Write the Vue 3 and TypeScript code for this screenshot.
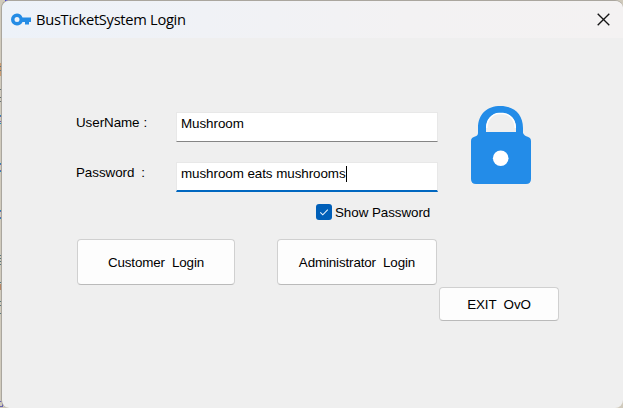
<script setup lang="ts">
import { ref } from 'vue'

const userName = ref('Mushroom')
const password = ref('mushroom eats mushrooms')
const showPassword = ref(true)
</script>

<template>
  <div class="desktop">
    <svg class="backdrop" width="623" height="408" shape-rendering="crispEdges">
      <rect width="623" height="408" fill="#d0cabc" />
      <rect x="5" width="3" height="1" fill="#282be8" />
      <rect x="15" width="12" height="1" fill="#9b9990" />
      <rect y="63" width="2" height="13" fill="#c99b70" />
      <path d="M0 66.5h2M0 70.5h2M0 89.5h2M0 97.5h2M0 101.5h2" stroke="#667377" />
      <path d="M0 116.5h1.5v5H0M0 164.5h1.5v6H0M0 211.5h1.5v6H0" fill="none" stroke="#6862af" />
      <path d="M0 115.5h1M0 123.5h1M0 163.5h1M0 171.5h1M0 210.5h1M0 218.5h1" stroke="#248eb5" />
      <path d="M0 255.5h2M0 258.5h2M0 261.5h2M0 264.5h2M0 282.5h2M0 301.5h2M0 305.5h2M0 313.5h2" stroke="#58777d" />
      <rect y="284" width="2" height="6" fill="#b68665" />
      <path d="M0 401.5h2v5H0" fill="none" stroke="#6862af" />
    </svg>
    <main class="window">
      <header class="titlebar">
        <svg class="key" width="20" height="14" viewBox="0 0 20 14">
          <path fill="#258ce5" fill-rule="evenodd" d="M6 .5a6 6 0 0 0 0 12c2.500 0 4.600-1.300 5.500-3.500H14v2.500h4V9h2V4.500h-8.500C10.600 2 8.500.5 6 .5Zm0 3.500a2.500 2.500 0 1 1 0 5a2.500 2.500 0 0 1 0-5Z" />
        </svg>
        <h1>BusTicketSystem Login</h1>
        <svg class="close" width="13" height="13" viewBox="0 0 13 13">
          <path d="M.7.7l11.600 11.600M12.300.7L.7 12.300" stroke="#151515" stroke-width="1.350" />
        </svg>
      </header>
      <section class="top">
        <div class="fields">
          <div class="row">
            <span class="label user">UserName<i>:</i></span>
            <div class="input"><span>{{ userName }}</span></div>
          </div>
          <div class="row second">
            <span class="label pass">Password<i>:</i></span>
            <div class="input focused"><span>{{ password }}</span><b class="caret"></b></div>
          </div>
          <div class="show" @click="showPassword = !showPassword">
            <span class="box">
              <svg v-if="showPassword" width="16" height="16" viewBox="0 0 16 16">
                <path d="M4.300 8.300l2.500 2.500 5-5.100" fill="none" stroke="#e4f1fc" stroke-width="1.100" />
              </svg>
            </span>
            <span class="show-text">Show Password</span>
          </div>
        </div>
        <svg class="lock" width="60" height="79" viewBox="0 0 60 79">
          <path fill="#238ce8" fill-rule="evenodd" d="M7 27V22C7 8 16 0 29.500 0S52 8 52 22v5c1 2 2 3 4 3.500 2.500.8 4 2 4 4.500v38q0 5-5 5H5q-5 0-5-5V35c0-2.500 1.500-3.700 4-4.500 2-.5 3-1.500 3-3.500Z" />
          <path fill="#efefef" d="M15 26v-4c0-9 6-15 15-15s15 6 15 15v4Z" />
          <path fill="none" stroke="#fff" stroke-width="1.500" d="M15.700 22C16 14 21 7.700 28 7.500h4C39 7.700 44 14 44.300 22" />
          <circle cx="29.700" cy="52.300" r="7.800" fill="#fff" />
        </svg>
      </section>
      <section class="buttons">
        <button class="customer"><span>Customer&nbsp; Login</span></button>
        <button class="admin"><span>Administrator&nbsp; Login</span></button>
      </section>
      <footer class="exit-row">
        <button class="exit"><span>EXIT&nbsp; OvO</span></button>
      </footer>
    </main>
  </div>
</template>

<style>
body { margin: 0; overflow: hidden; }
</style>

<style scoped>
* { box-sizing: border-box; }
.desktop {
  position: relative;
  width: 623px;
  height: 408px;
  padding-left: 1px;
  font-family: "Liberation Sans", Arial, sans-serif;
  font-size: 13.400px;
  letter-spacing: -0.060px;
  line-height: 16px;
  color: #000;
  white-space: nowrap;
}
.backdrop { position: absolute; left: 0; top: 0; }
.window {
  position: relative;
  width: 622px;
  height: 408px;
  border: 1px solid #aaa69e;
  border-right: 0;
  border-bottom: 0;
  border-radius: 8px;
  background: #efefef;
  overflow: hidden;
}
.titlebar {
  display: flex;
  align-items: center;
  height: 37px;
  padding: 0 13px 0 9px;
  background: linear-gradient(90deg, #edf2f9, #f3f2f3 65%, #f4f2f2);
}
.key { flex: none; }
h1 {
  margin: 0 0 1px 5px;
  font: 400 14.700px/20px "Open Sans", "Noto Sans", sans-serif;
  letter-spacing: -0.300px;
}
.close { margin: 0 0 1px auto; }
.top {
  display: flex;
  padding-left: 74px;
  height: 201px;
}
.fields { width: 362px; padding-top: 74px; }
.row { display: flex; height: 30px; }
.second { margin-top: 20px; }
.label { width: 100px; padding-top: 3px; }
.label i { font-style: normal; }
.user i { margin-left: 4px; }
.pass i { margin-left: 7px; }
.input {
  display: flex;
  width: 262px;
  height: 30px;
  padding: 3px 0 0 4px;
  background: #fff;
  border: 1px solid #e8e8e8;
  border-bottom: 1px solid #858585;
}
.focused { border-bottom: 2px solid #0067c0; }
.caret { width: 1px; height: 16px; background: #000; }
.show { display: flex; height: 16px; margin: 12px 0 0 240px; }
.box { width: 16px; height: 16px; border-radius: 3px; background: #005fb8; }
.box svg { display: block; }
.show-text { margin-left: 3px; padding-top: 1px; }
.lock { margin: 68px 0 0 33px; }
.buttons { display: flex; gap: 42px; padding-left: 75px; }
button {
  height: 46px;
  padding: 2px 0 0;
  border: 1px solid #d0d0d0;
  border-bottom-color: #bababa;
  border-radius: 4px;
  background: #fdfdfd;
  color: #000;
  font: inherit;
  letter-spacing: -0.140px;
}
.customer { width: 158px; }
.admin { width: 160px; }
.exit-row { display: flex; margin: 2px 0 0 437px; }
.exit { width: 120px; height: 34px; }
</style>
